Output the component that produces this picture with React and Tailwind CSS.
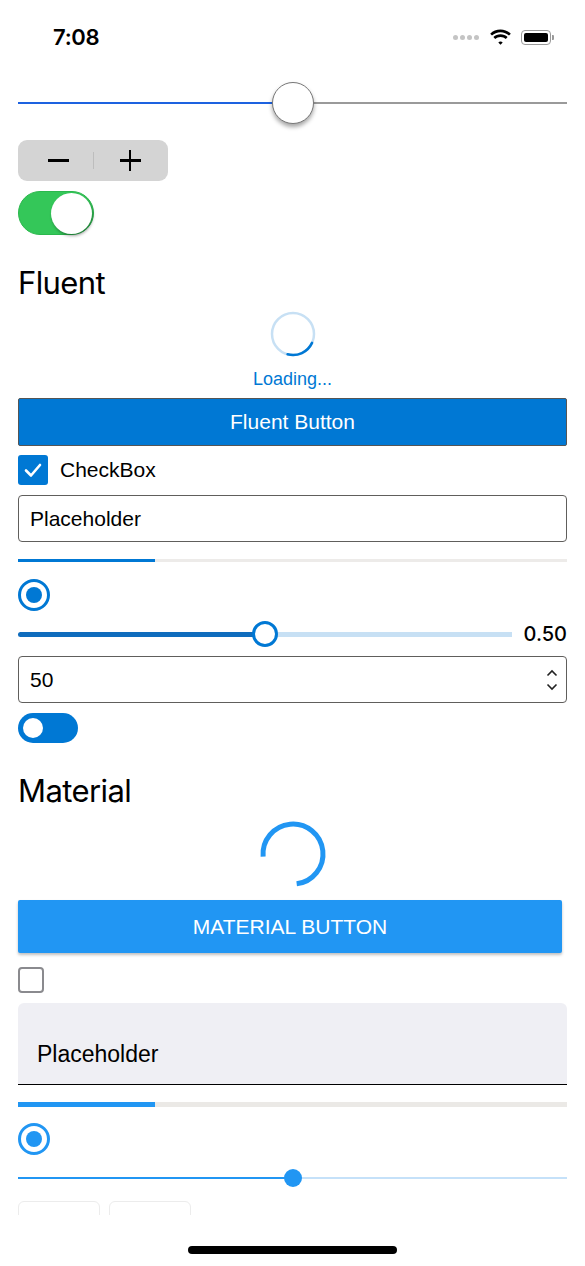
import React from "react";

const sans = { fontFamily: '"Liberation Sans", Arial, sans-serif' };
const ios = { fontFamily: 'Inter, "Liberation Sans", sans-serif' };

function StatusBar() {
  return (
    <div className="h-[74px] shrink-0 flex items-center justify-between pl-[53px] pr-[31px]">
      <span className="text-[22px] font-semibold text-black tracking-[-0.3px]" style={ios}>7:08</span>
      <div className="flex items-center gap-[9px]">
        <div className="flex items-center gap-[2px] mr-[1px]">
          <span className="w-[5px] h-[5px] rounded-full bg-[#c4c4c4]" />
          <span className="w-[5px] h-[5px] rounded-full bg-[#c4c4c4]" />
          <span className="w-[5px] h-[5px] rounded-full bg-[#c4c4c4]" />
          <span className="w-[5px] h-[5px] rounded-full bg-[#c4c4c4]" />
        </div>
        <svg width="23" height="17" viewBox="0 0 23 17">
          <path d="M11.5 3.2c3.3 0 6.3 1.3 8.5 3.4l1.8-1.9C19.1 2.1 15.5.6 11.5.6S3.9 2.1 1.2 4.7L3 6.6c2.2-2.1 5.2-3.4 8.5-3.4z" fill="#000" />
          <path d="M11.5 7.9c2 0 3.9.8 5.3 2.1l1.8-1.9c-1.9-1.8-4.4-2.8-7.1-2.8s-5.2 1-7.1 2.8L6.2 10c1.4-1.3 3.3-2.1 5.3-2.1z" fill="#000" />
          <path d="M11.5 12.5c.8 0 1.6.3 2.2.9l-2.2 2.4-2.2-2.4c.6-.6 1.4-.9 2.2-.9z" fill="#000" />
        </svg>
        <div className="flex items-center">
          <div className="w-[30px] h-[15px] rounded-[4px] border border-[#9a9a9a] p-[2px]">
            <div className="w-full h-full rounded-[2px] bg-black" />
          </div>
          <div className="w-[2px] h-[5px] rounded-r-[1px] bg-[#9a9a9a] ml-[1px]" />
        </div>
      </div>
    </div>
  );
}

function Spinner() {
  return (
    <svg width="48" height="48" viewBox="0 0 48 48">
      <circle cx="24" cy="24" r="21" fill="none" stroke="#c7e0f4" strokeWidth="2.5" />
      <path d="M43.03 32.87 A21 21 0 0 1 18.56 44.28" fill="none" stroke="#0078d4" strokeWidth="2.5" strokeLinecap="round" />
    </svg>
  );
}

function MatSpinner() {
  return (
    <svg width="70" height="70" viewBox="0 0 70 70">
      <path d="M5.11 37.61 A30 30 0 1 1 38.66 64.78" fill="none" stroke="#2196f3" strokeWidth="5" />
    </svg>
  );
}

export default function App() {
  return (
    <div className="w-[585px] h-[1266px] bg-white flex flex-col text-black" style={sans}>
      <StatusBar />
      <div className="h-[1141px] shrink-0 overflow-hidden px-[18px] flex flex-col *:shrink-0">
        {/* iOS slider */}
        <div className="mt-[6px] h-[46px] relative flex items-center">
          <div className="flex-1 flex items-center">
            <div className="w-[254px] h-[2px] bg-[#1d62e0]" />
            <div className="flex-1 h-[1.5px] bg-[#9a9a9a]" />
          </div>
          <div className="absolute left-[254px] top-[2px] w-[42px] h-[42px] rounded-full bg-white border border-[#777] shadow-[0_3px_4px_rgba(0,0,0,0.35)]" />
        </div>
        {/* stepper */}
        <div className="mt-[14px] w-[150px] h-[41px] rounded-[9px] bg-[#d4d4d4] flex items-center">
          <div className="flex-1 flex items-center justify-center">
            <div className="w-[21px] h-[2.5px] bg-black ml-[6px]" />
          </div>
          <div className="w-[1px] h-[17px] bg-[#bdbdbd]" />
          <div className="flex-1 flex items-center justify-center">
            <div className="relative w-[21px] h-[21px] mr-[1px]">
              <div className="absolute left-0 top-[9px] w-[21px] h-[2.5px] bg-black" />
              <div className="absolute top-0 left-[9px] w-[2.5px] h-[21px] bg-black" />
            </div>
          </div>
        </div>
        {/* iOS switch */}
        <div className="mt-[10px] w-[76px] h-[44px] rounded-full bg-[#34c759] border border-[#2bb84d] relative">
          <div className="absolute right-[1px] top-[0.5px] w-[41px] h-[41px] rounded-full bg-white shadow-[1px_2px_3px_rgba(0,0,0,0.35)]" />
        </div>
        {/* Fluent heading */}
        <div className="mt-[30px] h-[36px] text-[31px] leading-[36px] tracking-[-0.6px]" style={ios}>Fluent</div>
        <div className="mt-[9px] flex flex-col items-center">
          <Spinner />
          <div className="mt-[11px] text-[18px] leading-[20px] text-[#0078d4]">Loading...</div>
        </div>
        <div className="mt-[9px] h-[48px] bg-[#0078d4] border border-[#555] rounded-[2px] flex items-center justify-center text-white text-[21px]">
          Fluent Button
        </div>
        <div className="mt-[9px] h-[30px] flex items-center gap-[12px]">
          <div className="w-[30px] h-[30px] rounded-[3px] bg-[#0078d4] flex items-center justify-center">
            <svg width="20" height="20" viewBox="0 0 20 20">
              <path d="M3 10.5 L8 15.5 L17 5" fill="none" stroke="#fff" strokeWidth="2.6" strokeLinecap="round" strokeLinejoin="round" />
            </svg>
          </div>
          <span className="text-[21px]">CheckBox</span>
        </div>
        <div className="mt-[10px] h-[47px] border border-[#605e5c] rounded-[4px] flex items-center px-[11px] text-[21px]">
          Placeholder
        </div>
        <div className="mt-[17px] h-[3px] bg-[#edebe9] flex">
          <div className="w-[137px] h-full bg-[#0078d4]" />
        </div>
        <div className="mt-[17px] w-[32px] h-[32px] rounded-full border-[3px] border-[#0078d4] flex items-center justify-center">
          <div className="w-[16px] h-[16px] rounded-full bg-[#0078d4]" />
        </div>
        <div className="mt-[10px] h-[26px] flex items-center">
          <div className="relative w-[494px] h-[26px] flex items-center">
            <div className="w-[247px] h-[5px] bg-[#0f6cbd] rounded-l-full" />
            <div className="flex-1 h-[5px] bg-[#c7e0f4]" />
            <div className="absolute left-[234px] top-0 w-[26px] h-[26px] rounded-full bg-white border-[3px] border-[#0078d4]" />
          </div>
          <span className="ml-auto text-[20px] font-medium" style={ios}>0.50</span>
        </div>
        <div className="mt-[9px] h-[47px] border border-[#605e5c] rounded-[4px] flex items-center pl-[11px] pr-[8px] text-[21px]">
          <span className="flex-1">50</span>
          <div className="flex flex-col items-center gap-[6px]">
            <svg width="12" height="8" viewBox="0 0 12 8"><path d="M1.5 6.5 L6 2 L10.5 6.5" fill="none" stroke="#222" strokeWidth="1.6" /></svg>
            <svg width="12" height="8" viewBox="0 0 12 8"><path d="M1.5 1.5 L6 6 L10.5 1.5" fill="none" stroke="#222" strokeWidth="1.6" /></svg>
          </div>
        </div>
        <div className="mt-[10px] w-[60px] h-[30px] rounded-full bg-[#0078d4] flex items-center pl-[5px]">
          <div className="w-[20px] h-[20px] rounded-full bg-white" />
        </div>
        {/* Material */}
        <div className="mt-[30px] h-[36px] text-[31px] leading-[36px] tracking-[-0.6px]" style={ios}>Material</div>
        <div className="mt-[10px] flex justify-center">
          <MatSpinner />
        </div>
        <div className="mt-[11px] mr-[5px] h-[53px] bg-[#2196f3] rounded-[2px] shadow-[0_2px_3px_rgba(0,0,0,0.25)] flex items-center justify-center text-white text-[21px]">
          MATERIAL BUTTON
        </div>
        <div className="mt-[14px] w-[26px] h-[26px] rounded-[4px] border-[2.5px] border-[#8a8a8e]" />
        <div className="mt-[10px] h-[82px] bg-[#efeff4] rounded-t-[6px] border-b-[1.5px] border-black flex items-end pb-[17px] pl-[19px] text-[23px] leading-[26px]">
          Placeholder
        </div>
        <div className="mt-[17px] h-[5px] bg-[#ebe9e6] flex">
          <div className="w-[137px] h-full bg-[#2196f3]" />
        </div>
        <div className="mt-[16px] w-[32px] h-[32px] rounded-full border-[3px] border-[#2196f3] flex items-center justify-center">
          <div className="w-[16px] h-[16px] rounded-full bg-[#2196f3]" />
        </div>
        <div className="mt-[13px] h-[20px] relative flex items-center">
          <div className="w-[275px] h-[2.5px] bg-[#2196f3]" />
          <div className="flex-1 h-[2.5px] bg-[#c5e1f9]" />
          <div className="absolute left-[266px] top-[1px] w-[18px] h-[18px] rounded-full bg-[#2196f3]" />
        </div>
        <div className="mt-[13px] flex gap-[9px]">
          <div className="w-[82px] h-[40px] rounded-[6px] border border-[#ececec]" />
          <div className="w-[82px] h-[40px] rounded-[6px] border border-[#ececec]" />
        </div>
      </div>
      <div className="flex-1 flex items-start justify-center pt-[31px]">
        <div className="w-[209px] h-[8px] rounded-full bg-black" />
      </div>
    </div>
  );
}
